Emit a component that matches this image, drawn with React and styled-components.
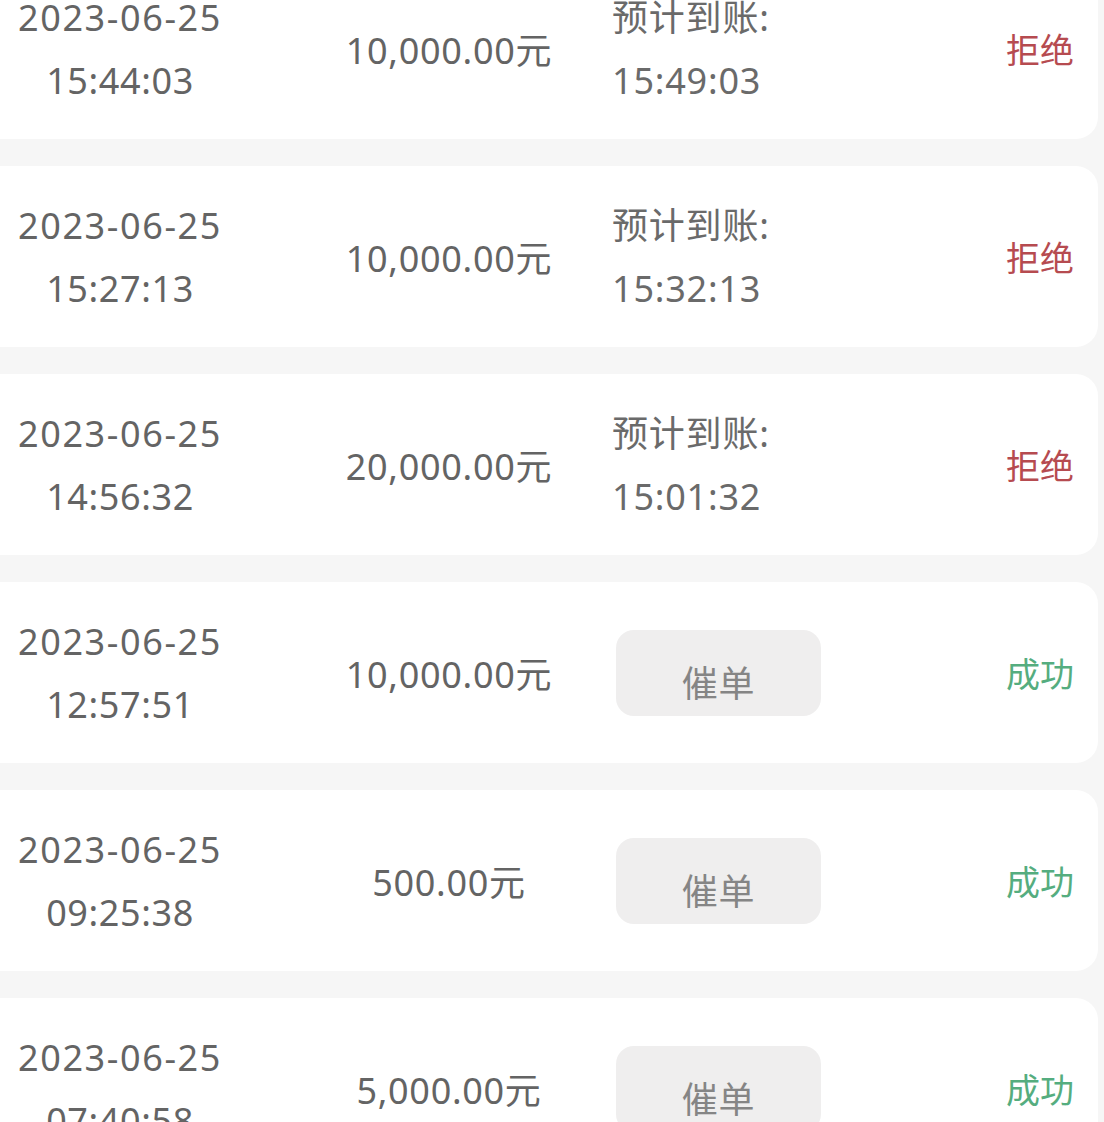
import React from "react";
import styled, { createGlobalStyle } from "styled-components";

const Global = createGlobalStyle`
	html, body {
		margin: 0;
		padding: 0;
		background: #f6f6f6;
		overflow: hidden;
	}
	body {
		font-family: "Noto Sans", "Noto Sans CJK SC", sans-serif;
	}
`;

const List = styled.div`
	display: flex;
	flex-direction: column;
	gap: 27px;
	margin: -42px 6px 0 -24px;
`;

const Card = styled.div`
	height: 181px;
	background: #ffffff;
	border-radius: 22px;
	display: flex;
	align-items: center;
	padding-right: 24px;
	box-sizing: border-box;
`;

const DateCol = styled.div`
	width: 288px;
	flex-shrink: 0;
	text-align: center;
	font-size: 36px;
	line-height: 63px;
	color: #646464;
`;

const Line = styled.div`
	letter-spacing: ${(p) => (p.$wide ? "1.6px" : "0.6px")};
`;

const Amount = styled.div`
	width: 348px;
	flex-shrink: 0;
	box-sizing: border-box;
	padding: 0 2px 0 24px;
	text-align: center;
	font-size: 36px;
	letter-spacing: 0.7px;
	color: #646464;
`;

const Middle = styled.div`
	flex: 1;
	font-size: 36px;
	line-height: 63px;
	letter-spacing: 0.8px;
	color: #6a6a6a;
`;

const Button = styled.div`
	width: 205px;
	height: 86px;
	margin-left: 4px;
	border-radius: 18px;
	background: #efeeee;
	color: #858585;
	font-size: 36px;
	display: flex;
	align-items: center;
	justify-content: center;
	padding-top: 22px;
	box-sizing: border-box;
`;

const Status = styled.div`
	font-size: 34px;
	color: ${(p) => (p.$ok ? "#55ad7f" : "#b64b50")};
`;

const rows = [
	{ date: "15:44:03", amount: "10,000.00元", eta: "15:49:03", ok: false },
	{ date: "15:27:13", amount: "10,000.00元", eta: "15:32:13", ok: false },
	{ date: "14:56:32", amount: "20,000.00元", eta: "15:01:32", ok: false },
	{ date: "12:57:51", amount: "10,000.00元", ok: true },
	{ date: "09:25:38", amount: "500.00元", ok: true },
	{ date: "07:40:58", amount: "5,000.00元", ok: true },
];

const App = () => {
	return (
		<>
			<Global />
			<List>
				{rows.map((r, i) => (
					<Card key={i}>
						<DateCol>
							<Line $wide>2023-06-25</Line>
							<Line>{r.date}</Line>
						</DateCol>
						<Amount>{r.amount}</Amount>
						<Middle>
							{r.eta ? (
								<>
									<div>预计到账:</div>
									<div>{r.eta}</div>
								</>
							) : (
								<Button>催单</Button>
							)}
						</Middle>
						<Status $ok={r.ok}>{r.ok ? "成功" : "拒绝"}</Status>
					</Card>
				))}
			</List>
		</>
	);
};

export default App;
